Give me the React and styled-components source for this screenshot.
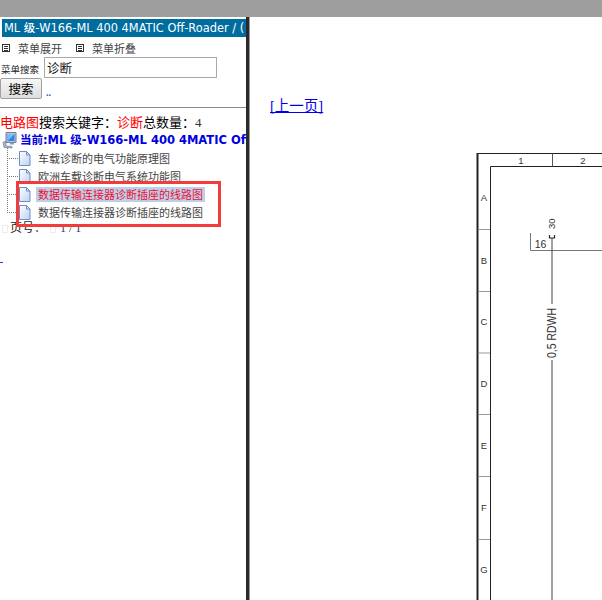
import React from 'react'
import styled, { createGlobalStyle } from 'styled-components'

const GlobalStyle = createGlobalStyle`
  html, body { margin: 0; padding: 0; background: #fff; overflow: hidden; }
  body { font-family: "Liberation Serif", "Noto Sans CJK SC", serif; }
`

const Page = styled.div`
  width: 602px;
  height: 600px;
  display: flex;
  flex-direction: column;
  overflow: hidden;
`

const TopBar = styled.div`
  height: 17px;
  flex: none;
  background: #9e9e9e;
`

const Frames = styled.div`
  flex: 1;
  display: flex;
  min-height: 0;
`

const Sidebar = styled.div`
  position: relative;
  width: 246px;
  flex: none;
  overflow: hidden;
  background: #fff;
`

const Divider = styled.div`
  width: 4px;
  flex: none;
  background: linear-gradient(to right, #2a2a2a 0 3px, #9a9a9a 3px 4px);
`

const Title = styled.div`
  margin: 2px 0 0 2px;
  height: 18px;
  padding-left: 2px;
  background: #006d9f;
  color: #fff;
  font: 500 11.4px/18px "DejaVu Sans", "Noto Sans CJK SC", sans-serif;
  white-space: nowrap;
  overflow: hidden;
`

const MenuRow = styled.div`
  display: flex;
  align-items: center;
  height: 18px;
  margin-top: 2px;
  padding-left: 2px;
  font: 11px/18px "Noto Sans CJK SC", sans-serif;
  color: #444;
`

const MenuItem = styled.span`
  display: flex;
  align-items: center;
  gap: 8px;
  margin-right: 14px;
`

const MenuIcon = styled.span`
  width: 8px;
  height: 8px;
  box-sizing: border-box;
  border: 1px solid #333;
  background: repeating-linear-gradient(#333 0 1px, #fff 1px 2px) center / 4px 5px no-repeat;
`

const SearchRow = styled.div`
  display: flex;
  align-items: center;
  height: 21px;
`

const SearchLabel = styled.label`
  width: 44px;
  padding-left: 1px;
  box-sizing: border-box;
  flex: none;
  font: 9.5px/12px "Noto Sans CJK SC", sans-serif;
  color: #222;
  margin-top: 2px;
  white-space: nowrap;
`

const SearchInput = styled.div`
  width: 173px;
  height: 21px;
  box-sizing: border-box;
  border: 1px solid #a9a9a9;
  padding-left: 2px;
  font: 12.5px/19px "Noto Sans CJK SC", sans-serif;
  color: #111;
`

const ButtonRow = styled.div`
  display: flex;
  align-items: flex-end;
  height: 21px;
`

const SearchButton = styled.button`
  width: 42px;
  height: 21px;
  padding: 0;
  border: 1px solid #a0a0a0;
  border-radius: 2px;
  background: linear-gradient(#f6f6f6, #dedede);
  font: 12.5px/19px "Noto Sans CJK SC", sans-serif;
  color: #000;
`

const DotLink = styled.a`
  margin-left: 4px;
  font: bold 10px/12px "Liberation Serif", serif;
  color: #1f5fbf;
`

const Rule = styled.hr`
  margin: 8px 0 0;
  border: 0;
  height: 1px;
  background: #8a8a8a;
`

const Summary = styled.div`
  margin-top: 7px;
  height: 15px;
  font: 13px/15px "Liberation Serif", "Noto Sans CJK SC", serif;
  color: #000;
  white-space: nowrap;
`

const Red = styled.span`
  color: #f00;
`

const Count = styled.span`
  color: #333;
`

const CurrentRow = styled.div`
  display: flex;
  align-items: center;
  height: 16px;
  margin-top: 2px;
  margin-left: 2px;
  white-space: nowrap;
`

const CurrentText = styled.span`
  margin-left: 2px;
  font: bold 11.5px/16px "DejaVu Sans", "Noto Sans CJK SC", sans-serif;
  color: #0000e0;
`

const Tree = styled.ul`
  position: relative;
  list-style: none;
  margin: 0;
  padding: 1px 0 0 7px;

  &::before {
    content: "";
    position: absolute;
    left: 7px;
    top: 0;
    height: 65px;
    border-left: 1px dotted #777;
  }
`

const TreeRow = styled.li`
  display: flex;
  align-items: center;
  height: 18px;
  white-space: nowrap;
`

const Branch = styled.span`
  width: 11px;
  flex: none;
  border-top: 1px dotted #777;
`

const TreeLabel = styled.span`
  margin-left: 5px;
  padding: 0 2px;
  height: 15px;
  font: 11px/15px "Noto Sans CJK SC", sans-serif;
  color: ${p => (p.$active ? '#f01030' : '#444')};
  background: ${p => (p.$active ? '#bcd0ea' : 'transparent')};
`

const Pager = styled.div`
  display: flex;
  align-items: center;
  height: 15px;
  padding-left: 2px;
  font: 12px/15px "Liberation Serif", "Noto Sans CJK SC", serif;
  color: #222;
  white-space: pre;
`

const MissingGlyph = styled.span`
  width: 6px;
  height: 8px;
  margin-left: ${p => p.$before}px;
  margin-right: ${p => p.$after}px;
  box-sizing: border-box;
  border: 1px solid #ececec;
`

const PagerNums = styled.span`
  color: #33336a;
`

const BottomLink = styled.div`
  margin-top: 26px;
  width: 3px;
  height: 1px;
  background: #2040d0;
`

const Callout = styled.div`
  position: absolute;
  left: 16px;
  top: 164px;
  width: 205px;
  height: 46px;
  box-sizing: border-box;
  border: 3px solid #f23c3c;
`

const Main = styled.div`
  position: relative;
  flex: 1;
  background: #fff;
  overflow: hidden;
`

const PrevLink = styled.a`
  display: block;
  margin: 80px 0 0 20px;
  font: 14.5px/18px "Liberation Serif", "Noto Sans CJK SC", serif;
  color: #0000ee;
  text-decoration: underline;
  text-decoration-skip-ink: none;
`

const Diagram = styled.svg`
  position: absolute;
  left: 226px;
  top: 135px;
`

const FileIcon = () => (
  <svg width="13" height="15" viewBox="0 0 13 15" style={{ flex: 'none' }}>
    <defs>
      <linearGradient id="sheet" x1="0" y1="0" x2="1" y2="1">
        <stop offset="0" stopColor="#ffffff" />
        <stop offset="1" stopColor="#bcd2f2" />
      </linearGradient>
    </defs>
    <path d="M1.5 .5H8.5L12 4V14.5H1.5Z" fill="url(#sheet)" stroke="#6f8cc4" />
    <path d="M8.5 .5V4H12Z" fill="#dfe9fa" stroke="#6f8cc4" />
  </svg>
)

const PcIcon = () => (
  <svg width="16" height="17" viewBox="0 0 16 17" style={{ flex: 'none' }}>
    <path d="M4 .5h10v10H4Z" fill="#b9c6da" stroke="#6f7f98" />
    <path d="M5.5 2h7v7h-7Z" fill="#2f86e8" />
    <path d="M5.5 2h7l-7 7Z" fill="#7fbcf6" />
    <path d="M8 10.5h4v2H8Z" fill="#8b98ac" />
    <path d="M1 10l3-.5V14l6 .5V16L2 15.5Z" fill="#aebacb" stroke="#5f6f88" strokeWidth=".6" />
  </svg>
)

const rows = [
  { text: '车载诊断的电气功能原理图' },
  { text: '欧洲车载诊断电气系统功能图' },
  { text: '数据传输连接器诊断插座的线路图', active: true },
  { text: '数据传输连接器诊断插座的线路图' },
]

const zones = [
  ['A', 49, 77],
  ['B', 111.5, 139],
  ['C', 173, 200.5],
  ['D', 234.5, 262],
  ['E', 297, 324],
  ['F', 359, 387],
  ['G', 421],
]

const Wiring = () => (
  <Diagram width="126" height="448" viewBox="0 0 126 448" fontFamily="'Liberation Sans', sans-serif">
    <g fill="none" stroke="#222">
      <path d="M1.5 448V1" strokeWidth="2" />
      <path d="M1 1.5H126" />
      <path d="M14.5 448V14.5H126" />
      <path d="M76.5 1.5V14.5" stroke="#555" />
      <path d="M54.5 81V98.5H126" stroke="#777" />
      <path d="M76 86V448" stroke="#444" />
      <path d="M73.5 83V86H78.5V83" strokeWidth="1.2" />
    </g>
    <g stroke="#999">
      {zones.filter(z => z[2]).map(([name, , y]) => (
        <path key={name} d={`M2 ${y + 0.5}H14`} />
      ))}
    </g>
    <rect x="68" y="152" width="16" height="56" fill="#fff" />
    <g fill="#333" fontSize="9.5" textAnchor="middle">
      <text x="45" y="12">1</text>
      <text x="107" y="12">2</text>
      {zones.map(([name, y]) => (
        <text key={name} x="8" y={y}>{name}</text>
      ))}
      <text x="64.5" y="96" fontSize="10.5">16</text>
      <text transform="translate(79 77) rotate(-90)" textAnchor="start" fontSize="9.5">30</text>
      <text
        transform="translate(80 206) rotate(-90)"
        textAnchor="start"
        fontSize="12"
        textLength="50"
        lengthAdjust="spacingAndGlyphs"
      >
        0,5 RDWH
      </text>
    </g>
  </Diagram>
)

export default function App() {
  return (
    <Page>
      <GlobalStyle />
      <TopBar />
      <Frames>
        <Sidebar>
          <Title>ML 级-W166-ML 400 4MATIC Off-Roader / (</Title>
          <MenuRow>
            <MenuItem><MenuIcon />菜单展开</MenuItem>
            <MenuItem><MenuIcon />菜单折叠</MenuItem>
          </MenuRow>
          <SearchRow>
            <SearchLabel>菜单搜索</SearchLabel>
            <SearchInput>诊断</SearchInput>
          </SearchRow>
          <ButtonRow>
            <SearchButton>搜索</SearchButton>
            <DotLink>..</DotLink>
          </ButtonRow>
          <Rule />
          <Summary><Red>电路图</Red>搜索关键字：<Red>诊断</Red>总数量：<Count>4</Count></Summary>
          <CurrentRow>
            <PcIcon />
            <CurrentText>当前:ML 级-W166-ML 400 4MATIC Off-Roader</CurrentText>
          </CurrentRow>
          <Tree>
            {rows.map(row => (
              <TreeRow key={row.text + row.active}>
                <Branch />
                <FileIcon />
                <TreeLabel $active={row.active}>{row.text}</TreeLabel>
              </TreeRow>
            ))}
          </Tree>
          <Pager>
            <MissingGlyph $before={0} $after={2} />页号：<MissingGlyph $before={4} $after={4} /><PagerNums>1 / 1</PagerNums>
          </Pager>
          <BottomLink />
          <Callout />
        </Sidebar>
        <Divider />
        <Main>
          <PrevLink>[上一页]</PrevLink>
          <Wiring />
        </Main>
      </Frames>
    </Page>
  )
}
